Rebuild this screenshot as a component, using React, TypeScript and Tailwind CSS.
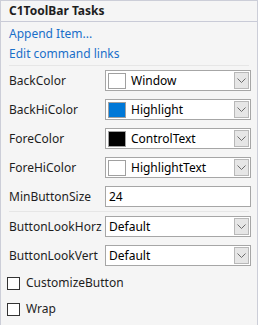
import React from "react";

type Row =
  | { kind: "color"; label: string; swatch: string; value: string }
  | { kind: "text"; label: string; value: string }
  | { kind: "select"; label: string; value: string };

const colorRows: Row[] = [
  { kind: "color", label: "BackColor", swatch: "#ffffff", value: "Window" },
  { kind: "color", label: "BackHiColor", swatch: "#0078d7", value: "Highlight" },
  { kind: "color", label: "ForeColor", swatch: "#000000", value: "ControlText" },
  { kind: "color", label: "ForeHiColor", swatch: "#ffffff", value: "HighlightText" },
  { kind: "text", label: "MinButtonSize", value: "24" },
];

const lookRows: Row[] = [
  { kind: "select", label: "ButtonLookHorz", value: "Default" },
  { kind: "select", label: "ButtonLookVert", value: "Default" },
];

const DropButton = () => (
  <div className="ml-auto mr-[1px] flex h-[17px] w-[15px] items-center justify-center border border-[#b8b8b8] bg-[#e6e6e6]">
    <svg width="9" height="5" viewBox="0 0 9 5">
      <path d="M0.5 0.5 L4.5 4.5 L8.5 0.5" fill="none" stroke="#6d6d6d" strokeWidth="1" />
    </svg>
  </div>
);

const PropRow = ({ row }: { row: Row }) => (
  <div className="flex h-[29px] items-center pl-2 pr-[6px]">
    <span className="w-[96px] text-[#1e1e1e]">{row.label}</span>
    <div className="flex h-[21px] flex-1 items-center border border-[#a6a6a6] bg-white pl-[1px]">
      {row.kind === "color" && (
        <div
          className="ml-[1px] h-[16px] w-[18px] border border-[#a0a0a0]"
          style={{ background: row.swatch }}
        />
      )}
      <span className={row.kind === "color" ? "ml-[5px] text-black" : "ml-[2px] text-black"}>{row.value}</span>
      {row.kind !== "text" && <DropButton />}
    </div>
  </div>
);

const CheckRow = ({ label }: { label: string }) => (
  <div className="flex h-[26px] items-center pl-[6px]">
    <div className="h-[13px] w-[13px] border border-[#333333] bg-white" />
    <span className="ml-[6px] text-[#1e1e1e]">{label}</span>
  </div>
);

export default function App() {
  return (
    <div
      className="h-[325px] w-[258px] overflow-hidden border-x border-t border-[#ccced8] bg-[#f5f5f5] text-[12px] leading-none"
      style={{ fontFamily: '"Noto Sans", "Open Sans", sans-serif' }}
    >
      <div className="flex h-[21px] items-center border-b border-[#c9cbd7] px-2 font-bold text-[#1e1e1e]">
        C1ToolBar Tasks
      </div>
      <div className="pt-[2px]">
        <div className="flex h-[20px] items-center px-2 text-[#1a6fc9]">Append Item...</div>
        <div className="flex h-[20px] items-center px-2 text-[#1a6fc9]">Edit command links</div>
      </div>
      <div className="mx-2 mt-[1px] h-px bg-[#e6e6e6]" />
      {colorRows.map((r) => (
        <PropRow key={r.label} row={r} />
      ))}
      <div className="mx-2 h-px bg-[#e6e6e6]" />
      {lookRows.map((r) => (
        <PropRow key={r.label} row={r} />
      ))}
      <CheckRow label="CustomizeButton" />
      <CheckRow label="Wrap" />
    </div>
  );
}
